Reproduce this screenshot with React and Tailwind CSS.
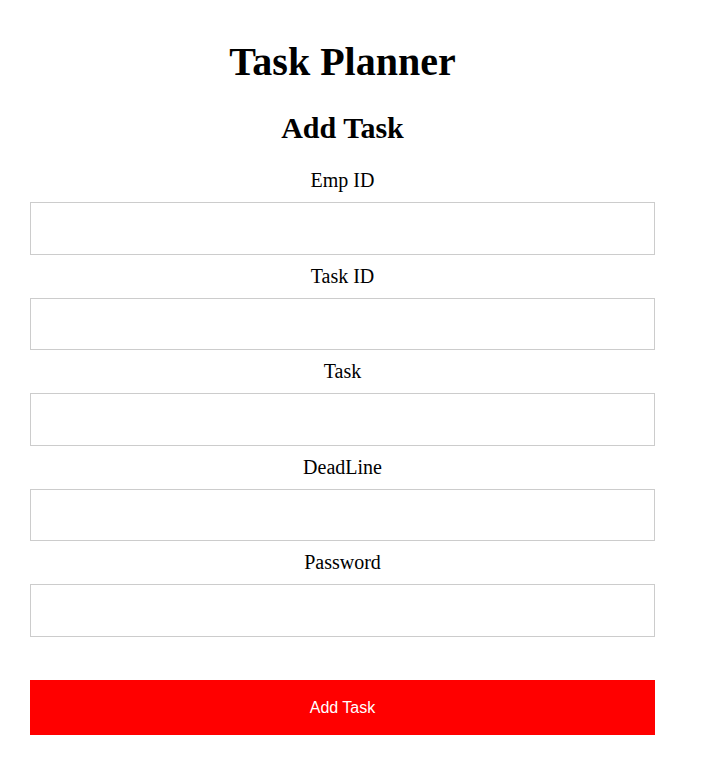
import React from "react";

const fields = ["Emp ID", "Task ID", "Task", "DeadLine", "Password"];

const App = () => {
  return (
    <div className="min-h-screen bg-white font-['Liberation_Serif',serif] text-black">
      <div className="ml-[30px] w-[625px] pt-[39px] text-center">
        <h1 className="text-[40px] font-bold leading-[46px]">Task Planner</h1>
        <h2 className="mt-[26px] text-[30px] font-bold leading-[34.5px]">
          Add Task
        </h2>

        <form className="mt-[23.5px]" onSubmit={(e) => e.preventDefault()}>
          {fields.map((field) => (
            <div key={field} className="mb-[10px]">
              <label className="block text-[20px] leading-[23px] mb-[10px]">
                {field}
              </label>
              <input
                type={field === "Password" ? "password" : "text"}
                className="block w-full h-[52.5px] border border-[#cccccc] bg-white px-3 outline-none"
              />
            </div>
          ))}

          <button
            type="submit"
            className="mt-[43.5px] block w-full h-[55px] bg-[#ff0000] text-white text-[16px] font-['Liberation_Sans',sans-serif]"
          >
            Add Task
          </button>
        </form>
      </div>
    </div>
  );
};

export default App;
